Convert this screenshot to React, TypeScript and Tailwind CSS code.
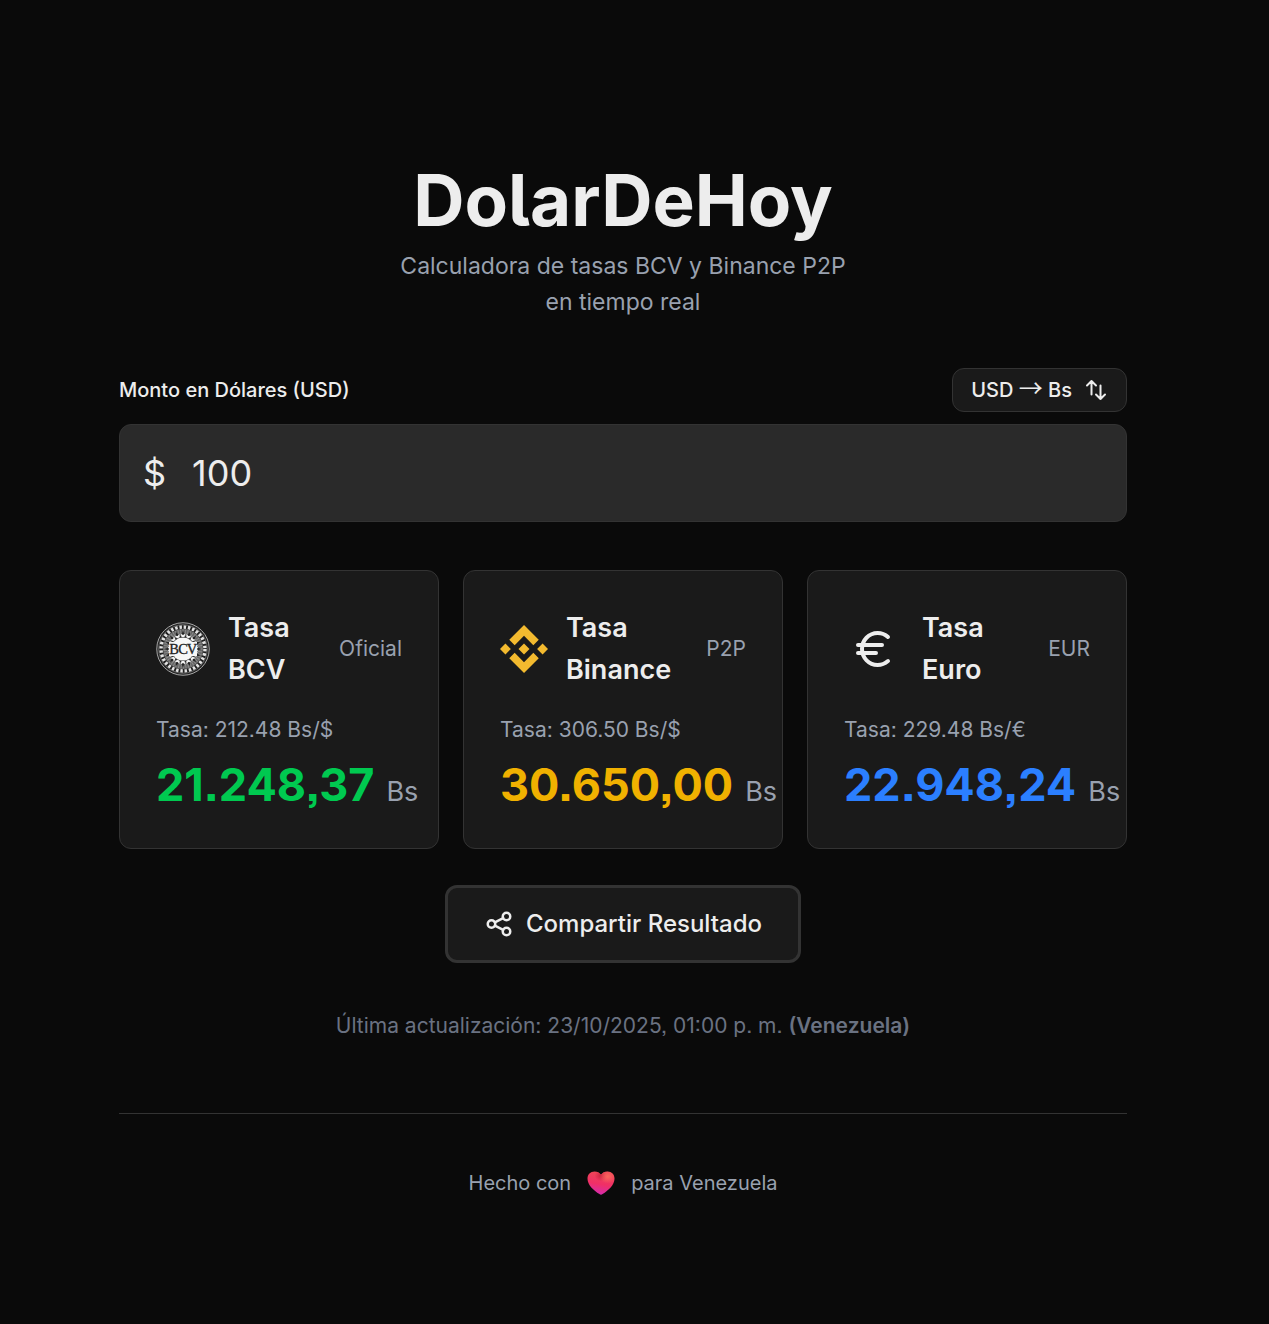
import { useState, type ReactNode } from "react";

function BcvLogo() {
  const rays = Array.from({ length: 16 }, (_, i) => i * 22.5);
  return (
    <svg viewBox="0 0 108 108" className="size-[54px] shrink-0" role="img" aria-label="BCV">
      <circle cx="54" cy="54" r="52.5" fill="#1f1f1f" stroke="#a8a8a8" strokeWidth="2" />
      <circle cx="54" cy="54" r="44" fill="none" stroke="#e2e2e2" strokeWidth="7" strokeDasharray="5 3.64" />
      <circle cx="54" cy="54" r="48.5" fill="none" stroke="#7c7c7c" strokeWidth="1.5" />
      <circle cx="54" cy="54" r="33" fill="none" stroke="#666666" strokeWidth="14" />
      <circle cx="54" cy="54" r="35" fill="none" stroke="#8f8f8f" strokeWidth="8" strokeDasharray="1.6 3.2" />
      {rays.map((angle) => (
        <g key={angle} transform={`rotate(${angle} 54 54)`}>
          <path d="M49 30 54 17l5 13z" fill="#252525" />
          <path d="M51 30l-2-7 5 3 5-3-2 7z" fill="#f2f2f2" />
        </g>
      ))}
      <circle cx="54" cy="54" r="23" fill="#f7f7f7" />
      <path d="M26 40h56v28H26z" fill="#f7f7f7" />
      {["B", "C", "V"].map((letter, i) => (
        <text
          key={letter}
          x={36 + i * 18}
          y="64"
          textAnchor="middle"
          fontFamily="Liberation Serif, serif"
          fontSize="29"
          fill="#222222"
          stroke="#222222"
          strokeWidth="0.6"
        >
          {letter}
        </text>
      ))}
    </svg>
  );
}

function BinanceLogo() {
  return (
    <svg viewBox="0 0 126.61 126.61" className="size-[48px] shrink-0" fill="#f3ba2f" aria-hidden="true">
      <path d="m38.73 53.2 24.59-24.58 24.6 24.6 14.3-14.31L63.32 0 24.43 38.9z" />
      <path d="m0 63.31 14.3-14.31 14.31 14.31-14.31 14.3z" />
      <path d="m38.73 73.41 24.59 24.59 24.6-24.6 14.31 14.29-38.91 38.92-38.91-38.9z" />
      <path d="m98 63.31 14.3-14.31 14.31 14.3-14.31 14.32z" />
      <path d="M77.83 63.3 63.32 48.78 48.81 63.28l14.51 14.5z" />
    </svg>
  );
}

function EuroIcon() {
  return (
    <span className="flex w-[60px] shrink-0 justify-center">
      <svg
        viewBox="0 0 24 24"
        className="size-[48px]"
        fill="none"
        stroke="currentColor"
        strokeWidth="2"
        strokeLinecap="round"
        strokeLinejoin="round"
        aria-hidden="true"
      >
        <path d="M4 10h12M4 14h9M19 6a7.7 7.7 0 0 0-5.2-2A7.9 7.9 0 0 0 6 12c0 4.4 3.5 8 7.8 8 2 0 3.8-.8 5.2-2" />
      </svg>
    </span>
  );
}

function SwapIcon() {
  return (
    <svg viewBox="0 0 24 24" className="size-[24px]" fill="none" stroke="currentColor" strokeWidth="2" strokeLinecap="round" strokeLinejoin="round" aria-hidden="true">
      <path d="M3 7.5 7.5 3m0 0L12 7.5M7.5 3v13.5m13.5 0L16.5 21m0 0L12 16.5m4.5 4.5V7.5" />
    </svg>
  );
}

function ShareIcon() {
  return (
    <svg viewBox="0 0 24 24" className="size-[30px]" fill="none" stroke="currentColor" strokeWidth="2" strokeLinecap="round" strokeLinejoin="round" aria-hidden="true">
      <circle cx="6" cy="12" r="3" />
      <circle cx="18" cy="6" r="3" />
      <circle cx="18" cy="18" r="3" />
      <path d="m8.684 10.658 6.632-3.316m-6.632 6 6.632 3.316" />
    </svg>
  );
}

function Heart() {
  return (
    <svg viewBox="0 0 28 24" className="h-[24px] w-[28px]" role="img" aria-label="amor">
      <defs>
        <linearGradient id="heart-base" x1="0.6" y1="0" x2="0.4" y2="1">
          <stop offset="0.1" stopColor="#ee4458" />
          <stop offset="0.55" stopColor="#f02f66" />
          <stop offset="1" stopColor="#d62bb0" />
        </linearGradient>
        <radialGradient id="heart-glow" cx="0.75" cy="0.22" r="0.3">
          <stop offset="0" stopColor="#fb655c" />
          <stop offset="1" stopColor="#fb655c" stopOpacity="0" />
        </radialGradient>
        <radialGradient id="heart-shade" cx="0.5" cy="0.18" r="0.24">
          <stop offset="0" stopColor="#c92340" />
          <stop offset="1" stopColor="#c92340" stopOpacity="0" />
        </radialGradient>
      </defs>
      {["url(#heart-base)", "url(#heart-shade)", "url(#heart-glow)"].map((fill) => (
        <path
          key={fill}
          fill={fill}
          d="M7.500.5c2.900 0 5.200 1.200 6.500 3.300C15.300 1.700 17.600.5 20.500.5c4.100 0 7 3 7 7.200 0 6.300-6.300 11.800-11.900 15.400-1.100.7-2.100.7-3.200 0C6.800 19.500.5 14 .5 7.700.5 3.500 3.400.5 7.500.5Z"
        />
      ))}
    </svg>
  );
}

type RateCardProps = {
  icon: ReactNode;
  name: string;
  tag: string;
  rate: string;
  value: string;
  color: string;
};

function RateCard({ icon, name, tag, rate, value, color }: RateCardProps) {
  return (
    <article className="rounded-xl border border-[#333333] bg-[#1a1a1a] p-9">
      <div className="mb-6 flex items-center justify-between">
        <div className="flex items-center gap-[18px]">
          {icon}
          <h2 className="text-[27px] leading-[42px] font-semibold">
            Tasa
            <br />
            {name}
          </h2>
        </div>
        <span className="text-[21px] leading-[30px] text-[#99a1af]">{tag}</span>
      </div>
      <p className="mb-3 text-[21px] leading-[30px] text-[#99a1af]">Tasa: {rate}</p>
      <p className={`flex items-baseline gap-3 text-[45px] leading-[55px] font-bold whitespace-nowrap ${color}`}>
        {value}
        <span className="text-[27px] leading-[36px] font-normal text-[#99a1af]">Bs</span>
      </p>
    </article>
  );
}

export default function App() {
  const [amount, setAmount] = useState("100");
  return (
    <div className="min-h-screen bg-[#0a0a0a] pr-[23px] font-['Inter',sans-serif] text-[#ededed] [font-feature-settings:'ss07']">
      <main className="mx-auto max-w-[1008px] pt-[164px] pb-[120px]">
        <header className="mb-12 text-center">
          <h1 className="mb-3 text-[71px] leading-[72px] font-bold [font-feature-settings:'cv05']">DolarDeHoy</h1>
          <p className="text-[23px] leading-[36px] text-[#99a1af]">
            Calculadora de tasas BCV y Binance P2P
            <br />
            en tiempo real
          </p>
        </header>

        <section className="mb-12">
          <div className="mb-3 flex items-center justify-between">
            <label htmlFor="amount" className="text-[20px] leading-[30px] font-medium">
              Monto en Dólares (USD)
            </label>
            <button
              type="button"
              className="flex h-[44px] items-center gap-3 rounded-xl border border-[#333333] bg-[#1a1a1a] px-[18px] text-[20px] leading-[30px] font-medium"
            >
              <span>
                USD <span className="font-['Noto_Sans_CJK_JP',sans-serif] text-[24px] leading-[20px] font-normal">→</span> Bs
              </span>
              <SwapIcon />
            </button>
          </div>
          <div className="flex h-[98px] items-center gap-[26px] rounded-xl border border-[#333333] bg-[#2a2a2a] px-[23px] text-[36px]">
            <span>$</span>
            <input
              id="amount"
              type="text"
              inputMode="decimal"
              value={amount}
              onChange={(e) => setAmount(e.target.value)}
              className="min-w-0 flex-1 bg-transparent outline-none"
            />
          </div>
        </section>

        <section className="grid grid-cols-3 gap-6">
          <RateCard icon={<BcvLogo />} name="BCV" tag="Oficial" rate="212.48 Bs/$" value="21.248,37" color="text-[#00c950]" />
          <RateCard icon={<BinanceLogo />} name="Binance" tag="P2P" rate="306.50 Bs/$" value="30.650,00" color="text-[#f0b100]" />
          <RateCard icon={<EuroIcon />} name="Euro" tag="EUR" rate="229.48 Bs/€" value="22.948,24" color="text-[#2b7fff]" />
        </section>

        <div className="mt-9 flex justify-center">
          <button
            type="button"
            className="flex h-[78px] items-center gap-3 rounded-xl border-3 border-[#333333] bg-[#1a1a1a] px-9 text-[24px] leading-[36px] font-medium"
          >
            <ShareIcon />
            Compartir Resultado
          </button>
        </div>

        <p className="mt-12 text-center text-[21px] leading-[30px] text-[#6a7282]">
          Última actualización: 23/10/2025, 01:00 p. m. <strong className="font-semibold">(Venezuela)</strong>
        </p>

        <footer className="mt-[72px] flex items-center justify-center gap-4 border-t border-[#333333] pt-12 text-[20px] leading-[42px] text-[#99a1af]">
          <span>Hecho con</span>
          <Heart />
          <span>para Venezuela</span>
        </footer>
      </main>
    </div>
  );
}
